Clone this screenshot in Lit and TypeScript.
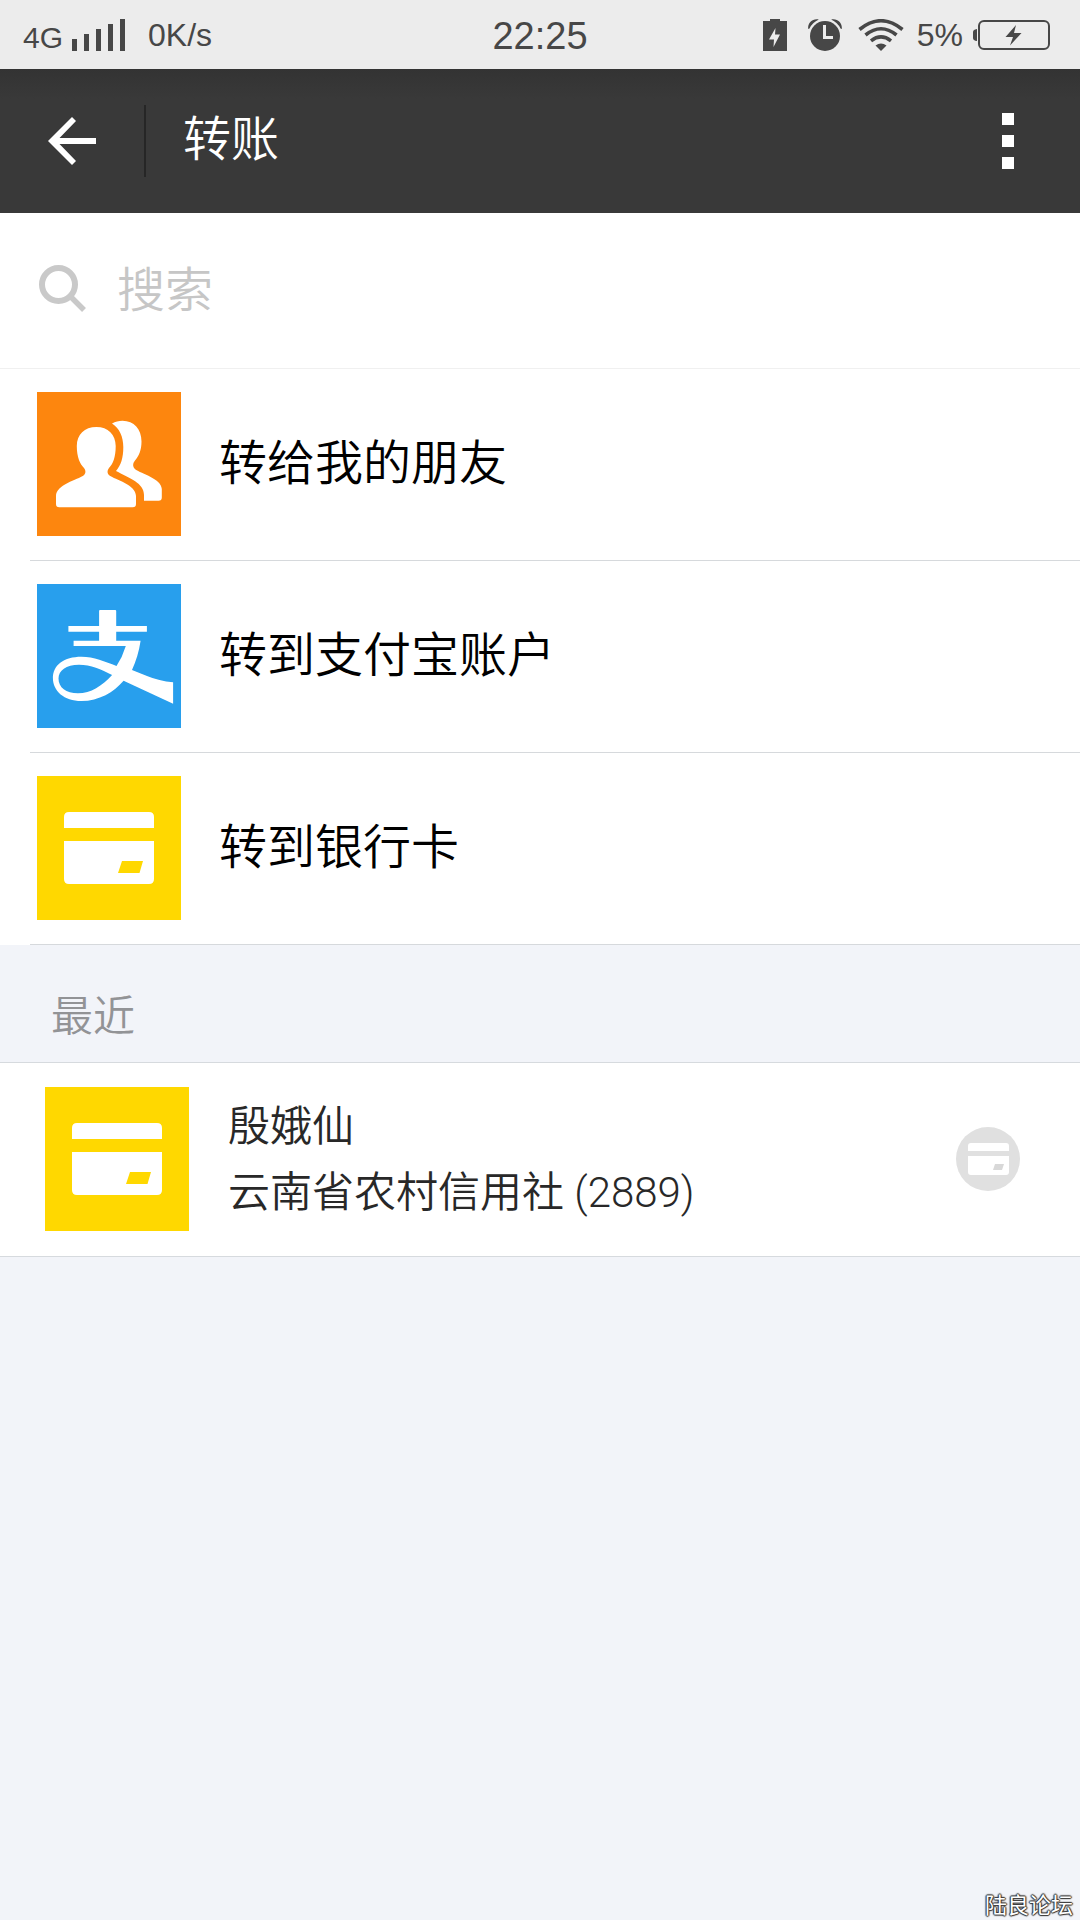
import { LitElement, html, svg, css } from "lit";
import { customElement } from "lit/decorators.js";

const friendsArt = svg`
  <path d="M59.4 35C47.5 35 39.8 42.5 39.8 54C39.8 65 43 72 47 76C49 78.500 49 81.500 46.500 83.500C41 87.500 19 92.500 19 104V112Q19 115.300 22.300 115.300H95.700Q99 115.300 99 112V104C99 92.500 78 87.500 72.500 83.500C70 81.500 70 78.500 72 76C76 72 78.700 65 78.700 54C78.700 42.500 71 35 59.400 35Z"/>
  <path d="M75 31.500C78.500 29.500 81.500 28.700 85.500 28.700C97 28.700 104.500 37 104.500 49.500C104.500 58 102 64 98 68.500C95.500 71.500 95.500 75 98.500 77.500C104 81.500 124.800 87 124.800 97V105.500Q124.800 108.700 121.600 108.700H107V103C107 91 93 86.500 79 79C84 73 86.300 66 86.300 55C86.300 45 82.500 36 75 31.500Z"/>`;

const alipayArt = svg`
  <path fill-rule="evenodd" d="M63 26H78.200Q79.200 26 79.200 27V42H109.900V47.700H79.200V56.700H103.600C102 68 99 77 95 86L110 92Q122 97 136.100 98.300V119.700L86.600 96.700C77 108 62 117 44.400 117C27 117 15.900 107 15.900 94C15.900 81 27 72.700 44.400 72.700C57 72.700 68 77.500 79.500 82Q85.500 73 88.800 62H36.600V56.700H62.100V47.700H31.400V42H62.100V27Q62.100 26 63 26Z
  M75.100 91C64 85.500 54 80.700 42 80.700C29 80.700 21.500 86.500 21.500 94.500C21.500 103.500 29 109.300 41 109.300C54 109.300 65 102 75.100 91Z"/>`;

const cardArt = svg`
  <path d="M27 52V41Q27 36 32 36H112Q117 36 117 41V52Z"/>
  <path fill-rule="evenodd" d="M27 65H117V103Q117 108 112 108H32Q27 108 27 103ZM85 85L81 97H102.500L106 85Z"/>`;

const tile = (art: unknown, tone: string) =>
  html`<svg class="tile ${tone}" viewBox="0 0 144 144" aria-hidden="true">${art}</svg>`;

const targets = [
  { label: "转给我的朋友", art: friendsArt, tone: "orange" },
  { label: "转到支付宝账户", art: alipayArt, tone: "blue" },
  { label: "转到银行卡", art: cardArt, tone: "yellow" },
];

@customElement("status-bar")
class StatusBar extends LitElement {
  static styles = css`
    :host {
      display: grid;
      grid-template-columns: 1fr auto 1fr;
      align-items: center;
      height: 69px;
      padding: 0 23px;
      box-sizing: border-box;
      background: #ececec;
      color: #474747;
      fill: #474747;
      font: 400 32px/40px "Liberation Sans", sans-serif;
    }
    .group { display: flex; align-items: center; }
    .end { justify-content: flex-end; padding-right: 7px; }
    .network { font-size: 30px; padding-top: 6px; margin-right: 9px; }
    .rate { margin-left: 23px; }
    .time { font-size: 38px; padding-top: 2px; }
    .saver { margin-right: 20px; }
    .alarm { margin-right: 15px; }
    .wifi { margin-right: 13px; }
    .percent { margin-right: 10px; }
    svg { display: block; flex: none; }
  `;
  render() {
    return html`
      <div class="group">
        <span class="network">4G</span>
        <svg width="53" height="32" viewBox="0 0 53 32" role="img" aria-label="信号">
          <path d="M0 20h5v12H0zM12 15h5v17h-5zM24 10h5v22h-5zM36 5h5v27h-5zM48 0h5v32h-5z"/>
        </svg>
        <span class="rate">0K/s</span>
      </div>
      <time class="time">22:25</time>
      <div class="group end">
        <svg class="saver" width="24" height="32" viewBox="0 0 24 32" aria-hidden="true">
          <path fill-rule="evenodd" d="M7 0h10v2h7v30H0V2h7zM12.500 9L6 20.500H11L10.500 28L17 15.500H12Z"/>
        </svg>
        <svg class="alarm" width="36" height="32" viewBox="0 0 36 32" aria-hidden="true">
          <circle cx="18" cy="17" r="15"/>
          <path d="M1.200 10C.5 4 5.500 -.8 11.800 .6Q5.500 3.500 2.500 9.500ZM34.800 10C35.500 4 30.500 -.8 24.200 .6Q30.500 3.500 33.500 9.500Z"/>
          <path d="M17.500 6V18.500H26" fill="none" stroke="#ececec" stroke-width="3"/>
        </svg>
        <svg class="wifi" width="46" height="32" viewBox="0 0 46 32" aria-hidden="true">
          <g fill="none" stroke="#474747" stroke-width="3.600">
            <path d="M1.500 10.500Q23 -7 44.500 10.500"/>
            <path d="M7.500 16Q23 3.500 38.500 16"/>
            <path d="M13 21.800Q23 14 33 21.800"/>
          </g>
          <path d="M17.500 26.500Q23 22.500 28.500 26.500L23 32Z"/>
        </svg>
        <span class="percent">5%</span>
        <svg width="77" height="32" viewBox="0 0 77 32" role="img" aria-label="充电中">
          <rect x="6" y="2" width="70" height="28" rx="5" fill="none" stroke="#474747" stroke-width="2"/>
          <path d="M4 10Q0 10.500 0 13V19Q0 21.500 4 22ZM43 6L32.500 18H40L37 26.500L48.500 14H41Z"/>
        </svg>
      </div>`;
  }
}

@customElement("app-root")
class AppRoot extends LitElement {
  static styles = css`
    :host {
      display: block;
      position: relative;
      min-height: 100vh;
      background: #f2f4f9;
      color: #000;
      font: 350 48px/72px Roboto, "Noto Sans CJK SC DemiLight", "Noto Sans CJK SC", sans-serif;
    }
    button {
      border: 0;
      margin: 0;
      padding: 0;
      background: none;
      color: inherit;
      font: inherit;
      text-align: left;
      cursor: pointer;
    }
    svg { display: block; flex: none; }
    .bar {
      display: flex;
      align-items: center;
      height: 144px;
      background: linear-gradient(#333, #393939 30px);
      color: #fff;
      fill: #fff;
    }
    .back { padding: 48px; }
    .rule { width: 2px; height: 72px; background: #262626; }
    .title { flex: 1; margin: 0 0 0 37px; padding-bottom: 2px; font: inherit; }
    .more { padding: 44px 66px; }
    .search {
      display: flex;
      align-items: center;
      gap: 30px;
      height: 155px;
      padding: 0 38px;
      background: #fff;
      border-bottom: 1px solid #f0f0f0;
    }
    .glass { padding-bottom: 4px; }
    .query {
      flex: 1;
      min-width: 0;
      height: 72px;
      padding: 0;
      border: 0;
      outline: 0;
      background: none;
      color: #333;
      font: inherit;
    }
    .query::placeholder { color: #c6c6c6; opacity: 1; }
    .list { margin: 0; padding: 0; list-style: none; background: #fff; }
    .target {
      display: flex;
      align-items: center;
      gap: 38px;
      width: 100%;
      padding: 23px 37px 0;
    }
    .list li::after {
      content: "";
      display: block;
      height: 1px;
      margin: 24px 0 0 30px;
      background: #d6d9dc;
    }
    .tile { width: 144px; height: 144px; fill: #fff; }
    .orange { background: #fd860e; }
    .blue { background: #289fed; }
    .yellow { background: #ffd800; }
    .heading {
      margin: 0;
      padding: 42px 51px 15px;
      color: #929396;
      font-size: 42px;
      line-height: 60px;
      font-weight: inherit;
    }
    .recent {
      display: flex;
      align-items: center;
      gap: 39px;
      width: 100%;
      padding: 24px 60px 25px 45px;
      border: solid #d6dade;
      border-width: 1px 0;
      background: #fff;
      color: #282828;
      font-size: 42px;
      line-height: 66px;
    }
    .who { flex: 1; display: flex; flex-direction: column; padding-top: 2px; }
    .mark {
      position: absolute;
      right: 7px;
      bottom: 2px;
      color: #fff;
      font: 400 22px/30px "Noto Sans CJK SC", sans-serif;
      text-shadow: 1px 0 1px #333, -1px 0 1px #333, 0 1px 1px #333, 0 -1px 1px #333, 0 0 2px #333;
    }
  `;
  render() {
    return html`
      <status-bar></status-bar>
      <header class="bar">
        <button class="back" aria-label="返回">
          <svg width="48" height="48" viewBox="0 0 48 48">
            <path d="M24 0L28 4L11.500 21H48V27H11.500L28 44L24 48L0 24Z"/>
          </svg>
        </button>
        <span class="rule"></span>
        <h1 class="title">转账</h1>
        <button class="more" aria-label="更多">
          <svg width="12" height="56" viewBox="0 0 12 56"><path d="M0 0h12v12H0zM0 22h12v12H0zM0 44h12v12H0z"/></svg>
        </button>
      </header>
      <label class="search">
        <svg class="glass" width="49" height="49" viewBox="0 0 49 49" fill="none" stroke="#c9c9c9" aria-hidden="true">
          <circle cx="20.500" cy="20.500" r="16.500" stroke-width="6"/>
          <path d="M32 32L46 46" stroke-width="5.500"/>
        </svg>
        <input class="query" type="text" placeholder="搜索" aria-label="搜索">
      </label>
      <ul class="list">
        ${targets.map((t) => html`<li><button class="target">${tile(t.art, t.tone)}<span>${t.label}</span></button></li>`)}
      </ul>
      <h2 class="heading">最近</h2>
      <button class="recent">
        ${tile(cardArt, "yellow")}
        <span class="who">
          <span>殷娥仙</span>
          <span>云南省农村信用社 (2889)</span>
        </span>
        <svg width="64" height="64" viewBox="0 0 64 64" aria-hidden="true">
          <circle cx="32" cy="32" r="32" fill="#e0e0e0"/>
          <path fill="#fff" d="M12 24V19Q12 16 15 16H50Q53 16 53 19V24ZM12 29H53V45Q53 48 50 48H15Q12 48 12 45Z"/>
          <path fill="#d8d8d8" d="M39 37H48L46 43H37Z"/>
        </svg>
      </button>
      <span class="mark">陆良论坛</span>`;
  }
}
